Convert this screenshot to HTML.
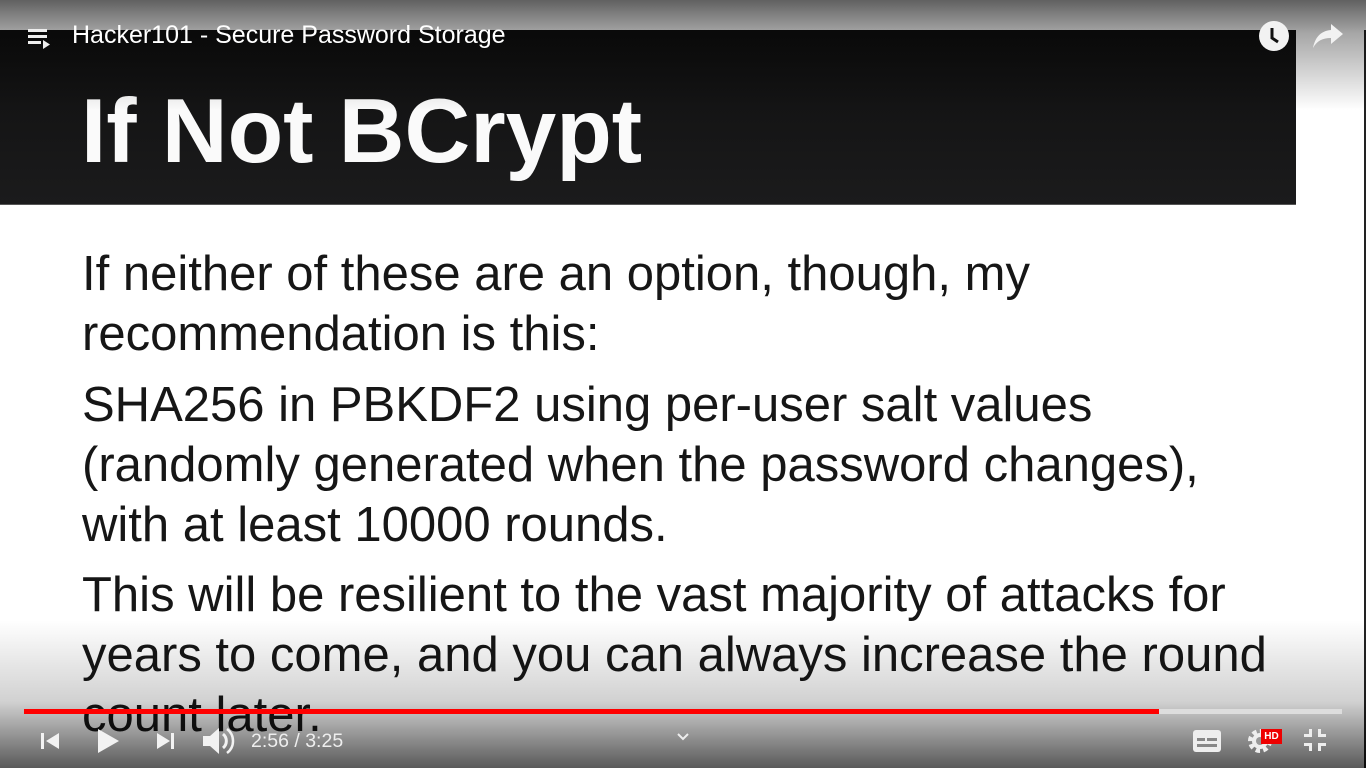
<!DOCTYPE html>
<html><head><meta charset="utf-8"><style>
html,body{margin:0;padding:0}
body{width:1366px;height:768px;position:relative;overflow:hidden;background:#fff;font-family:"Liberation Sans",sans-serif}
.hdr{position:absolute;left:0;top:30px;width:1296px;height:174px;background:linear-gradient(#0f0f0f,#1b1b1c);border-bottom:1px solid #555}
.title{position:absolute;left:81px;top:82px;font-size:91px;font-weight:bold;color:#fafafa;line-height:100px;white-space:nowrap}
.l{position:absolute;left:82px;font-size:49px;color:#161616;white-space:nowrap;line-height:60px}
.topg{position:absolute;left:0;top:0;width:1366px;height:110px;background:linear-gradient(rgba(0,0,0,.62),rgba(0,0,0,.35) 30%,rgba(0,0,0,0))}
.botg{position:absolute;left:0;top:620px;width:1366px;height:148px;background:linear-gradient(rgba(0,0,0,0),rgba(0,0,0,.18) 55%,rgba(0,0,0,.65))}
.rline{position:absolute;left:1364px;top:30px;width:2px;height:738px;background:#222}
.vt{position:absolute;left:72px;top:21px;font-size:25px;color:#fff;white-space:nowrap}
.time{position:absolute;left:251px;top:730px;font-size:19.5px;color:#eee}
</style></head><body>
<div class="hdr"></div>
<div class="title">If Not BCrypt</div>
<div class="l" style="top:244px">If neither of these are an option, though, my</div>
<div class="l" style="top:304px">recommendation is this:</div>
<div class="l" style="top:375px">SHA256 in PBKDF2 using per-user salt values</div>
<div class="l" style="top:435px">(randomly generated when the password changes),</div>
<div class="l" style="top:495px">with at least 10000 rounds.</div>
<div class="l" style="top:565px">This will be resilient to the vast majority of attacks for</div>
<div class="l" style="top:625px">years to come, and you can always increase the round</div>
<div class="l" style="top:685px">count later.</div>
<div class="rline"></div>
<div class="topg"></div>
<div class="botg"></div>
<svg style="position:absolute;left:28px;top:27px" width="28" height="24" viewBox="0 0 28 24" fill="#eee"><rect x="0" y="2" width="19" height="3"/><rect x="0" y="8" width="19" height="3"/><rect x="0" y="14" width="13" height="3"/><path d="M15 13 L22 17.5 L15 22Z"/></svg>
<div class="vt">Hacker101 - Secure Password Storage</div>
<svg style="position:absolute;left:1258px;top:20px" width="32" height="32" viewBox="0 0 32 32"><circle cx="16" cy="16" r="15" fill="#f2f2f2"/><path d="M14 8 V18 L20 22" stroke="#111" stroke-width="3" fill="none"/></svg>
<svg style="position:absolute;left:1311px;top:22px" width="34" height="28" viewBox="0 0 34 28"><path d="M20 2 L32 12 L20 22 V16 C11 16 6 19 2 26 C4 16 9 9 20 8Z" fill="#f2f2f2"/></svg>
<div style="position:absolute;left:24px;top:709px;width:1135px;height:5px;background:#f00"></div>
<div style="position:absolute;left:1159px;top:709px;width:183px;height:5px;background:#ddd"></div>
<svg style="position:absolute;left:38px;top:728px" width="26" height="26" viewBox="0 0 26 26" fill="#f2f2f2"><rect x="3" y="5" width="3" height="16"/><path d="M21 5 V21 L8 13Z"/></svg>
<svg style="position:absolute;left:94px;top:726px" width="28" height="30" viewBox="0 0 28 30" fill="#f2f2f2"><path d="M4 3 L25 15 L4 27Z"/></svg>
<svg style="position:absolute;left:152px;top:728px" width="26" height="26" viewBox="0 0 26 26" fill="#f2f2f2"><path d="M5 5 L18 13 L5 21Z"/><rect x="19" y="5" width="3" height="16"/></svg>
<svg style="position:absolute;left:200px;top:725px" width="36" height="32" viewBox="0 0 36 32" fill="#f2f2f2"><path d="M3 11 H10 L19 3 V29 L10 21 H3Z"/><path d="M23 9 A9 9 0 0 1 23 23" stroke="#f2f2f2" stroke-width="3" fill="none"/><path d="M27 4 A15 15 0 0 1 27 28" stroke="#f2f2f2" stroke-width="2.5" fill="none"/></svg>
<div class="time">2:56 / 3:25</div>
<svg style="position:absolute;left:676px;top:732px" width="14" height="10" viewBox="0 0 14 10"><path d="M2 2 L7 7 L12 2" stroke="#eee" stroke-width="2" fill="none"/></svg>
<svg style="position:absolute;left:1192px;top:728px" width="30" height="26" viewBox="0 0 30 26"><rect x="1" y="2" width="28" height="22" rx="3" fill="#eee"/><rect x="5" y="10" width="8" height="3" fill="#888"/><rect x="15" y="10" width="10" height="3" fill="#888"/><rect x="5" y="16" width="20" height="3" fill="#888"/></svg>
<svg style="position:absolute;left:1246px;top:727px" width="28" height="28" viewBox="0 0 28 28"><circle cx="14" cy="14" r="9" fill="none" stroke="#eee" stroke-width="6" stroke-dasharray="4 3"/><circle cx="14" cy="14" r="8" fill="#eee"/><circle cx="14" cy="14" r="4" fill="#999"/></svg>
<div style="position:absolute;left:1261px;top:729px;width:21px;height:15px;background:#e00;color:#fff;font-size:10px;font-weight:bold;line-height:15px;text-align:center">HD</div>
<svg style="position:absolute;left:1302px;top:727px" width="26" height="26" viewBox="0 0 26 26" fill="#eee"><path d="M7 2 H10 V10 H2 V7 H7Z"/><path d="M16 2 H19 V7 H24 V10 H16Z"/><path d="M2 16 H10 V24 H7 V19 H2Z"/><path d="M16 16 H24 V19 H19 V24 H16Z"/></svg>
</body></html>
